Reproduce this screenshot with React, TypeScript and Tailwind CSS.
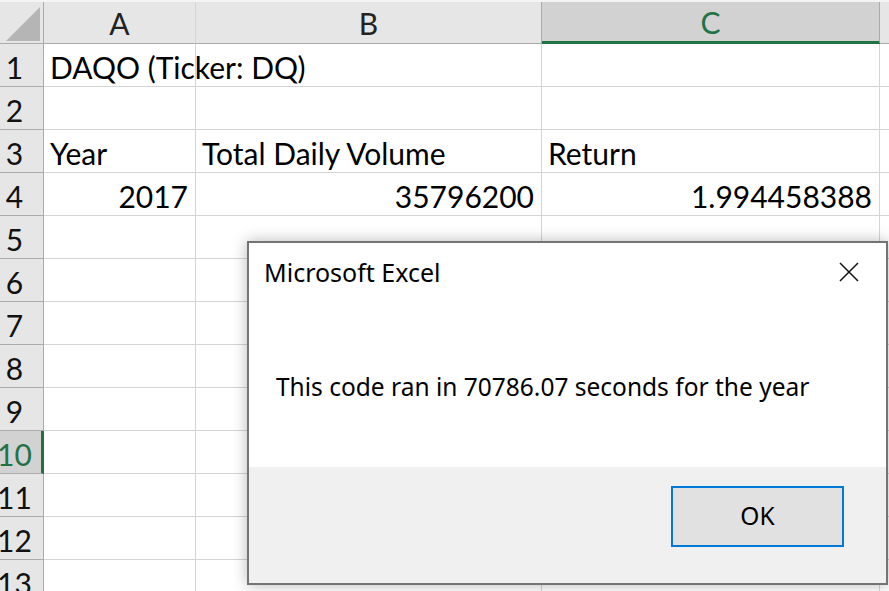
import React from "react";

const cellFont = { fontFamily: "Lato, 'Noto Sans', sans-serif" };
const uiFont = { fontFamily: "'Noto Sans', 'Open Sans', sans-serif" };

type Cell = { text?: string; align?: "left" | "right" };

const rows: Cell[][] = [
  [{ text: "DAQO (Ticker: DQ)" }, {}, {}],
  [{}, {}, {}],
  [{ text: "Year" }, { text: "Total Daily Volume" }, { text: "Return" }],
  [
    { text: "2017", align: "right" },
    { text: "35796200", align: "right" },
    { text: "1.994458388", align: "right" },
  ],
];

const colWidths = ["w-[152px]", "w-[346px]", "w-[338px]"];

function HeaderRow() {
  return (
    <div className="flex h-[44px] shrink-0 bg-[#e6e6e6] border-t-2 border-[#f4f4f4]">
      <div className="w-[44px] shrink-0 border-r border-b border-[#ababab] relative">
        <svg className="absolute left-[6px] top-[5px]" width="34" height="34" viewBox="0 0 34 34">
          <polygon points="34,0 34,34 0,34" fill="#b5b5b5" />
        </svg>
      </div>
      <div className="w-[152px] shrink-0 border-r border-[#d4d4d4] border-b border-b-[#ababab] flex items-center justify-center pt-[2px] text-[30px] text-[#222]">
        A
      </div>
      <div className="w-[346px] shrink-0 border-r border-[#ababab] border-b border-b-[#ababab] flex items-center justify-center pt-[2px] text-[30px] text-[#222]">
        B
      </div>
      <div className="w-[338px] shrink-0 bg-[#d2d2d2] border-r border-[#ababab] border-b-[3px] border-b-[#217346] flex items-center justify-center pt-[2px] text-[30px] text-[#217346]">
        C
      </div>
      <div className="flex-1 border-b border-[#ababab]" />
    </div>
  );
}

function RowHeader({ n }: { n: number }) {
  const selected = n === 10;
  return (
    <div
      className={
        selected
          ? "w-[44px] shrink-0 bg-[#d2d2d2] border-r-[3px] border-r-[#217346] border-b border-b-[#ababab] overflow-hidden"
          : "w-[44px] shrink-0 bg-[#e6e6e6] border-r border-b border-[#ababab] overflow-hidden"
      }
    >
      <div
        className={
          selected
            ? "w-[29px] h-full flex items-center justify-center pt-[4px] text-[30px] text-[#217346] whitespace-nowrap"
            : "w-[29px] h-full flex items-center justify-center pt-[4px] text-[30px] text-[#111] whitespace-nowrap"
        }
      >
        {n}
      </div>
    </div>
  );
}

function Sheet() {
  const all: Cell[][] = [];
  for (let i = 0; i < 13; i++) all.push(rows[i] ?? [{}, {}, {}]);
  return (
    <div className="flex flex-col" style={cellFont}>
      <HeaderRow />
      {all.map((r, i) => (
        <div key={i} className="flex h-[43px] shrink-0">
          <RowHeader n={i + 1} />
          {r.map((c, j) => (
            <div
              key={j}
              className={
                colWidths[j] +
                " shrink-0 border-r border-b border-[#d4d4d4] flex items-center pt-[4px] whitespace-nowrap text-[30px] text-black " +
                (c.align === "right" ? "justify-end pr-[7px]" : "justify-start pl-[6px]")
              }
            >
              {c.text}
            </div>
          ))}
          <div className="flex-1 border-b border-[#d4d4d4]" />
        </div>
      ))}
    </div>
  );
}

function Dialog() {
  return (
    <div
      className="absolute left-[247px] top-[241px] w-[641px] h-[344px] bg-white border-2 border-[#747474] shadow-[0_0_14px_rgba(0,0,0,0.28)] flex flex-col"
      style={uiFont}
    >
      <div className="h-[60px] flex items-center justify-between pl-[15px] pr-[27px]">
        <span className="text-[25px] text-black">Microsoft Excel</span>
        <svg width="20" height="20" viewBox="0 0 20 20" className="mt-[-2px]">
          <path d="M1 1 L19 19 M19 1 L1 19" stroke="#111" strokeWidth="1.5" />
        </svg>
      </div>
      <div className="h-[164px] flex items-center pl-[27px] pt-[4px]">
        <span className="text-[24.5px] text-black">This code ran in 70786.07 seconds for the year</span>
      </div>
      <div className="flex-1 bg-[#f0f0f0] flex justify-end items-start pt-[19px] pr-[42px]">
        <button className="w-[173px] h-[61px] bg-[#e1e1e1] border-2 border-[#0078d7] text-[24.5px] text-black flex items-center justify-center">
          OK
        </button>
      </div>
    </div>
  );
}

export default function App() {
  return (
    <div className="relative w-[889px] h-[591px] overflow-hidden bg-white">
      <Sheet />
      <Dialog />
    </div>
  );
}
